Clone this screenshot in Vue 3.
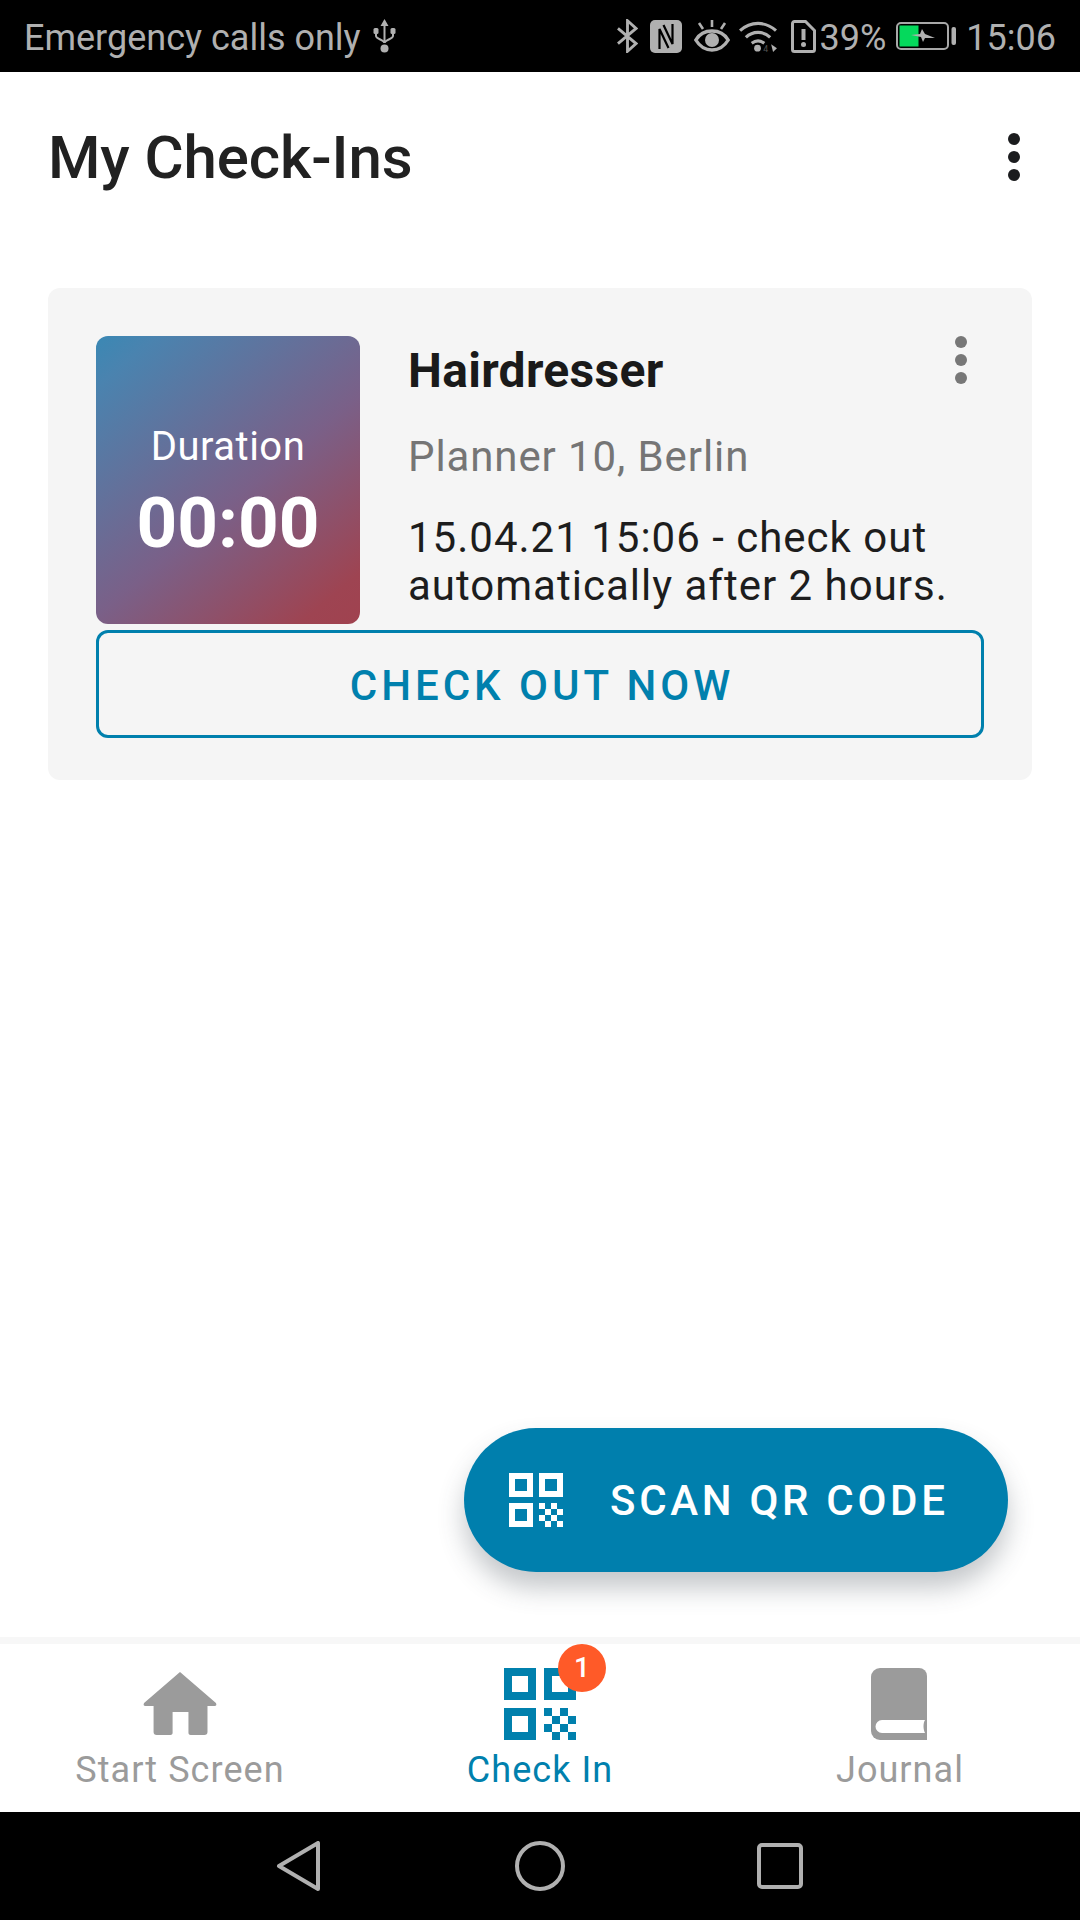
<script setup>
const tabs = [
  { id: 'home', label: 'Start Screen' },
  { id: 'qr', label: 'Check In', active: true, badge: 1 },
  { id: 'book', label: 'Journal' },
]
const qrCells = [
  [0,0],[16,0],[8,8],[24,8],[0,16],[16,16],[8,24],[24,24],
]
</script>

<template>
  <div class="screen">
    <div class="status">
      <div class="status-left">
        <span class="status-text carrier">Emergency calls only</span>
        <svg class="usb" width="23" height="34" viewBox="0 0 22 34">
          <g fill="#b0b0b0">
            <path d="M11 0l4 7h-3v17h-2V7H7z"/>
            <circle cx="11" cy="29.500" r="4"/>
            <rect x="0" y="9" width="5" height="6" rx="1.500"/>
            <rect x="17" y="9" width="5" height="6" rx="1.500"/>
          </g>
          <path d="M2.500 14v3c0 3 8.500 4 8.500 7 0-3 8.500-4 8.500-7v-3" fill="none" stroke="#b0b0b0" stroke-width="2"/>
        </svg>
      </div>
      <div class="status-right">
        <svg class="ic-bt" width="21" height="34" viewBox="0 0 22 34"><path d="M1 9l19 16-9 8V1l9 8L1 25" fill="none" stroke="#b0b0b0" stroke-width="3"/></svg>
        <svg class="ic-nfc" width="32" height="33" viewBox="0 0 32 33">
          <rect width="32" height="33" rx="5" fill="#b0b0b0"/>
          <path d="M9.500 29V9L18.500 28" fill="none" stroke="#000" stroke-width="2.200"/>
          <path d="M22.500 4V24L13.500 5" fill="none" stroke="#000" stroke-width="2.200"/>
        </svg>
        <svg class="ic-eye" width="36" height="32" viewBox="0 0 36 32">
          <path d="M1.800 20C6 13 11 11 18 11s12 2 16.200 9C30 27 25 30 18 30S6 27 1.800 20z" fill="none" stroke="#b0b0b0" stroke-width="3.400"/>
          <circle cx="18" cy="20" r="7" fill="#b0b0b0"/>
          <path d="M18 0v7M5 3l4 6M31 3l-4 6" stroke="#b0b0b0" stroke-width="2.600"/>
        </svg>
        <svg class="ic-wifi" width="39" height="33" viewBox="0 0 40 34">
          <path d="M1 11c11-10 26-10 37 0M7 18c7-7 18-7 25 0M13 24c4-3 9-3 13 0" fill="none" stroke="#b0b0b0" stroke-width="3.200"/>
          <circle cx="19" cy="29" r="3.500" fill="#b0b0b0"/>
          <text x="25" y="33" font-size="9" fill="#555" class="ic-text">4</text>
          <path d="M33 25l6 4-4 4z" fill="#b0b0b0"/>
        </svg>
        <svg class="ic-sim" width="25" height="33" viewBox="0 0 25 33">
          <path d="M3.500 1.500h11l9 9v19a2 2 0 0 1-2 2h-18a2 2 0 0 1-2-2v-26a2 2 0 0 1 2-2z" fill="none" stroke="#b0b0b0" stroke-width="3"/>
          <rect x="10.500" y="9" width="4" height="11" fill="#b0b0b0"/>
          <circle cx="12.500" cy="24.500" r="2.500" fill="#b0b0b0"/>
        </svg>
        <span class="status-text pct">39%</span>
        <svg class="ic-bat" width="60" height="28" viewBox="0 0 60 28">
          <rect x="1" y="1" width="51" height="26" rx="4" fill="none" stroke="#a8a8a8" stroke-width="2"/>
          <rect x="3.500" y="3.500" width="19" height="21" fill="#05d95c"/>
          <rect x="55.500" y="5" width="4.500" height="18" rx="2" fill="#b0b0b0"/>
          <path d="M15 13L24 12L26 7L29 12L39 16L29 16L27 20L25 15z" fill="#b0b0b0"/>
        </svg>
        <span class="status-text time">15:06</span>
      </div>
    </div>

    <main class="content">
      <header class="topbar">
        <h1 class="title">My Check-Ins</h1>
        <div class="kebab dark"><i></i><i></i><i></i></div>
      </header>

      <section class="card">
        <div class="card-top">
          <div class="duration">
            <span class="dur-label">Duration</span>
            <span class="dur-value">00:00</span>
          </div>
          <div class="info">
            <div class="name-row">
              <h2 class="name">Hairdresser</h2>
              <div class="kebab grey"><i></i><i></i><i></i></div>
            </div>
            <p class="place">Planner 10, Berlin</p>
            <p class="when">15.04.21 15:06 - check out<br>automatically after 2 hours.</p>
          </div>
        </div>
        <button class="checkout">CHECK OUT NOW</button>
      </section>
    </main>

    <button class="fab">
      <svg class="fab-qr" width="54" height="54" viewBox="0 0 54 54">
        <path fill="#fff" fill-rule="evenodd" d="M0 0h24v24H0zM6 6v12h12V6zM30 0h24v24H30zM36 6v12h12V6zM0 30h24v24H0zM6 36v12h12V36z"/>
        <rect v-for="(c, i) in qrCells" :key="i" :x="30 + c[0] * 0.750" :y="30 + c[1] * 0.750" width="6" height="6" fill="#fff"/>
      </svg>
      <span>SCAN QR CODE</span>
    </button>

    <nav class="tabs">
      <div v-for="t in tabs" :key="t.id" class="tab" :class="{ active: t.active }">
        <div class="tab-icon">
          <svg v-if="t.id === 'home'" class="home-ic" width="74" height="64" viewBox="0 0 70 64" preserveAspectRatio="none">
            <path fill="#9b9b9b" d="M35 0l34 31c1 2 0 3-1 3h-7v26c0 2-1 3-3 3H45c-1 0-2-1-2-2V40H28v21c0 1-1 2-2 2H13c-2 0-3-1-3-3V34H2c-1 0-2-1-1-3z"/>
          </svg>
          <svg v-else-if="t.id === 'qr'" width="72" height="72" viewBox="0 0 72 72">
            <path fill="#0080ad" fill-rule="evenodd" d="M0 0h32v32H0zM8 8v16h16V8zM40 0h32v32H40zM48 8v16h16V8zM0 40h32v32H0zM8 48v16h16V48z"/>
            <rect v-for="(c, i) in qrCells" :key="i" :x="40 + c[0]" :y="40 + c[1]" width="8" height="8" fill="#0080ad"/>
          </svg>
          <svg v-else class="book-ic" width="56" height="72" viewBox="0 0 56 72">
            <path fill="#9b9b9b" d="M9 0h39a8 8 0 0 1 8 8v64H9a9 9 0 0 1-9-9V9a9 9 0 0 1 9-9z"/>
            <path fill="#fff" d="M11 52h43c-2 3-2 9 0 13H11a6.500 6.500 0 0 1 0-13z"/>
          </svg>
          <span v-if="t.badge" class="badge">{{ t.badge }}</span>
        </div>
        <span class="tab-label">{{ t.label }}</span>
      </div>
    </nav>

    <div class="sysnav">
      <svg width="45" height="50" viewBox="0 0 45 50"><path d="M3 25L42 2v46z" fill="none" stroke="#b0b0b0" stroke-width="4" stroke-linejoin="round"/></svg>
      <svg width="50" height="50" viewBox="0 0 50 50"><circle cx="25" cy="25" r="23" fill="none" stroke="#b0b0b0" stroke-width="4"/></svg>
      <svg width="46" height="46" viewBox="0 0 46 46"><rect x="2" y="2" width="42" height="42" rx="3" fill="none" stroke="#b0b0b0" stroke-width="4"/></svg>
    </div>
  </div>
</template>

<style>
html, body { margin: 0; padding: 0; background: #fff; }
</style>

<style scoped>
.screen {
  position: relative;
  width: 1080px;
  height: 1920px;
  display: flex;
  flex-direction: column;
  overflow: hidden;
  background: #fff;
  font-family: Roboto, "Noto Sans", sans-serif;
}
.status {
  height: 72px;
  flex: none;
  background: #000;
  display: flex;
  align-items: center;
  justify-content: space-between;
  padding: 0 24px 0 24px;
}
.status-left, .status-right { display: flex; align-items: center; }
.status-text { color: #b0b0b0; font-size: 36px; line-height: 76px; height: 72px; }
.usb { margin-left: 12px; }
.ic-nfc { margin-left: 12px; }
.ic-eye { margin-left: 12px; }
.ic-wifi { margin-left: 9px; }
.ic-sim { margin-left: 13px; }
.ic-text { font-family: Roboto, sans-serif; }
.pct { margin-left: 4px; }
.ic-bat { margin-left: 10px; }
.time { margin-left: 10px; }

.content { flex: 1; display: flex; flex-direction: column; padding: 0 48px; min-height: 0; }
.topbar {
  height: 170px;
  display: flex;
  align-items: center;
  justify-content: space-between;
  box-sizing: border-box;
  margin-bottom: 46px;
}
.title { margin: 2px 0 0; font-size: 60px; font-weight: 500; color: #212121; line-height: 1; letter-spacing: -0.1px; }
.kebab { display: flex; flex-direction: column; gap: 6px; }
.kebab i { display: block; width: 12px; height: 12px; border-radius: 50%; }
.kebab.dark { margin-right: 12px; }
.kebab.dark i { background: #1b1c1e; }
.kebab.grey { margin-right: 17px; margin-top: 0; }
.kebab.grey i { background: #777; }

.card {
  background: #f5f5f5;
  border-radius: 12px;
  padding: 48px 48px 42px;
  box-sizing: border-box;
  height: 492px;
}
.card-top { display: flex; gap: 48px; }
.duration {
  width: 264px;
  height: 288px;
  flex: none;
  border-radius: 12px;
  background: linear-gradient(140deg, #3a88b4 0%, #4a83af 10%, #7a6088 55%, #9e4452 90%, #a0424f 100%);
  color: #fff;
  display: flex;
  flex-direction: column;
  align-items: center;
  padding-top: 89px;
  box-sizing: border-box;
}
.dur-label { font-size: 40px; line-height: 44px; letter-spacing: 0.5px; }
.dur-value { font-size: 71px; font-weight: 700; line-height: 84px; margin-top: 12px; }
.info { flex: 1; min-width: 0; }
.name-row { display: flex; justify-content: space-between; align-items: flex-start; }
.name { margin: 0; font-size: 48px; font-weight: 700; color: #1a1a1a; line-height: 70px; letter-spacing: 0.3px; }
.place { margin: 25px 0 0; font-size: 42px; color: #757575; line-height: 52px; letter-spacing: 0.9px; }
.when { margin: 31px 0 0; font-size: 42px; color: #1d1d1d; line-height: 48px; letter-spacing: 1px; white-space: nowrap; }
.checkout {
  display: block;
  width: 888px;
  height: 108px;
  margin-top: 6px;
  background: transparent;
  border: 3px solid #0080ad;
  border-radius: 12px;
  color: #0080ad;
  font-family: inherit;
  font-size: 42px;
  font-weight: 500;
  letter-spacing: 4px;
  padding: 3px 0 0 4px;
}
.fab {
  position: absolute;
  left: 464px;
  top: 1428px;
  width: 544px;
  height: 144px;
  border: 0;
  border-radius: 72px;
  background: #007fad;
  color: #fff;
  display: flex;
  align-items: center;
  padding: 0 0 0 45px;
  box-sizing: border-box;
  gap: 47px;
  font-family: inherit;
  font-size: 42px;
  font-weight: 500;
  letter-spacing: 3.700px;
  box-shadow: 0 16px 26px rgba(60, 70, 80, 0.3);
}
.tabs {
  height: 175px;
  flex: none;
  box-sizing: border-box;
  border-top: 7px solid #f7f7f7;
  display: grid;
  grid-template-columns: 360px 360px 360px;
  background: #fff;
}
.tab { display: flex; flex-direction: column; align-items: center; color: #9b9b9b; }
.tab.active { color: #0080ad; }
.tab-icon { position: relative; height: 96px; display: flex; align-items: flex-end; }
.home-ic { margin-bottom: 4px; }
.book-ic { margin-right: 2px; }
.tab-label { font-size: 36px; line-height: 48px; letter-spacing: 1.050px; margin-top: 6px; }
.badge {
  position: absolute;
  left: 54px;
  top: 0;
  width: 48px;
  height: 48px;
  border-radius: 50%;
  background: #ff5a28;
  color: #fff;
  font-size: 28px;
  font-weight: 500;
  line-height: 48px;
  text-align: center;
}
.sysnav {
  height: 108px;
  flex: none;
  background: #000;
  display: flex;
  align-items: center;
  padding-left: 276px;
}
.sysnav svg:nth-child(2) { margin-left: 194px; }
.sysnav svg:nth-child(3) { margin-left: 192px; }
</style>
